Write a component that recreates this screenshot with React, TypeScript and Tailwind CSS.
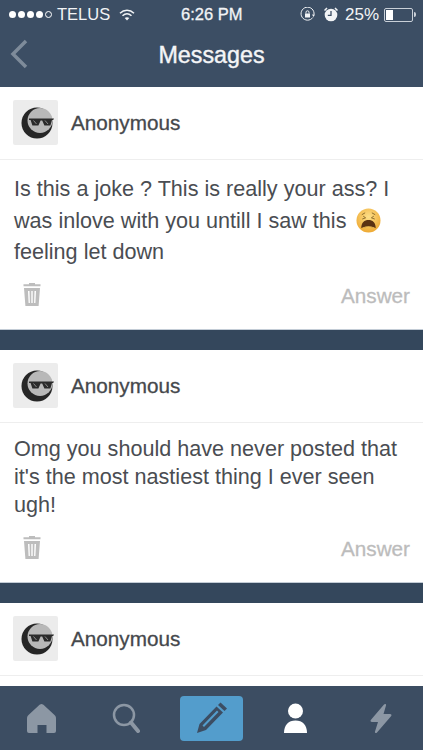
import React from "react";

const font = { fontFamily: '"Liberation Sans", Arial, sans-serif' };

function Avatar() {
  return (
    <div className="flex h-[45px] w-[45px] items-center justify-center rounded-[2px] bg-[#ececec]">
      <svg width="36" height="34" viewBox="-2 0 36 34">
        <circle cx="17" cy="17" r="15.500" fill="#262626" />
        <circle cx="20" cy="14.500" r="12.500" fill="#b8b8b8" />
        <path d="M9 12.500h25l-.8 1.500h-1.200l-1.600 5.500h-6l-2.200-5h-1.600l-2.200 5h-6l-1.800-5.500H9z" fill="#2a2a2a" />
        <path d="M13.500 14.500l3 3.500M25 14.500l3 3.500" stroke="#8a8a8a" strokeWidth="1" />
      </svg>
    </div>
  );
}

function Trash() {
  return (
    <svg width="18" height="25" viewBox="0 0 18 25" fill="#bdbdbd">
      <path d="M6 1h6v1.300h5.500v2H.5v-2H6z" />
      <path d="M1 6h16l-1.400 18H2.400zM5 9l.6 12h1.300L6.500 9zM8.300 9v12h1.400V9zM11.500 9l-.4 12h1.300L13 9z" fillRule="evenodd" />
    </svg>
  );
}

function Emoji() {
  return (
    <svg width="25" height="25" viewBox="0 0 26 26" className="ml-[4px] inline-block align-[-5px]">
      <defs>
        <radialGradient id="face" cx="50%" cy="35%" r="70%">
          <stop offset="0%" stopColor="#fde08a" />
          <stop offset="100%" stopColor="#eda52c" />
        </radialGradient>
      </defs>
      <circle cx="13" cy="13" r="12.500" fill="url(#face)" />
      <path d="M6 7l3.500-2M20 7l-3.500-2M6.500 11.500l3.500-1.300-2.500-1.700M19.500 11.500l-3.500-1.300 2.500-1.700" stroke="#8a6a2a" strokeWidth="1" fill="none" />
      <path d="M5.500 21c0-6 3.300-8.500 7.500-8.500s7.500 2.500 7.500 8.500c-4-1.500-11-1.500-15 0z" fill="#5b3212" />
      <path d="M7.500 20c3.500-1.200 7.500-1.200 11 0l1 .8c-4-1.300-9-1.300-13 0z" fill="#f3c65a" />
    </svg>
  );
}

function CardHeader() {
  return (
    <div className="flex h-[73px] items-center gap-[13px] border-b border-[#eeeeee] pb-[1px] pl-[13px]">
      <Avatar />
      <span className="mt-[1px] text-[20.700px] leading-none text-[#45484c] [-webkit-text-stroke:0.3px_#45484c]">Anonymous</span>
    </div>
  );
}

function CardFooter() {
  return (
    <div className="flex items-center justify-between pt-[3px] pr-[13px] pl-[23px]">
      <Trash />
      <span className="mt-[4px] text-[20.700px] leading-none text-[#bcbcbc] [-webkit-text-stroke:0.3px_#bcbcbc]">Answer</span>
    </div>
  );
}

function Separator() {
  return <div className="h-[21px] border-t border-[#c3ccd6] bg-[#34475c]" />;
}

export default function App() {
  return (
    <div style={font} className="relative flex h-[750px] w-[423px] flex-col overflow-hidden bg-white">
      {/* Header */}
      <header className="h-[87px] shrink-0 bg-[#3c4e64] text-white">
        <div className="relative flex h-[29px] items-center justify-between pr-[7px] pl-[9px] text-[17px] text-[#f2f4f6]">
          <div className="flex items-center gap-[2px]">
            <div className="flex items-center gap-[2px]">
              <span className="h-[7px] w-[7px] rounded-full bg-white" />
              <span className="h-[7px] w-[7px] rounded-full bg-white" />
              <span className="h-[7px] w-[7px] rounded-full bg-white" />
              <span className="h-[7px] w-[7px] rounded-full bg-white" />
              <span className="h-[7px] w-[7px] rounded-full border border-white" />
            </div>
            <span className="ml-[3px] text-[16.500px] leading-none">TELUS</span>
            <svg width="16" height="12" viewBox="0 0 16 12" className="ml-[7px]" fill="none" stroke="#f2f4f6" strokeWidth="1.500">
              <path d="M1 4.200c4-3.800 10-3.800 14 0M3.500 6.800c2.700-2.500 6.300-2.500 9 0" />
              <path d="M8 11.500l-2.300-2.600c1.400-1 3.200-1 4.600 0z" fill="#f2f4f6" stroke="none" />
            </svg>
          </div>
          <span className="absolute left-[181px] text-[16.500px] leading-none [-webkit-text-stroke:0.3px_#f2f4f6]">6:26 PM</span>
          <div className="flex items-center">
            <svg width="15" height="15" viewBox="0 0 15 15" fill="none" stroke="#f2f4f6" strokeWidth="1">
              <path d="M12.800 10.500A6.500 6.500 0 1 1 14 7.500" />
              <rect x="5" y="6.500" width="5" height="4" fill="#f2f4f6" stroke="none" />
              <path d="M6 6.500V5.300a1.500 1.500 0 0 1 3 0v1.200" />
              <path d="M12 7.500h3l-1.500 2.500z" fill="#f2f4f6" stroke="none" />
            </svg>
            <svg width="14" height="15" viewBox="0 0 14 15" className="ml-[9px]">
              <circle cx="7" cy="8" r="6.300" fill="#f2f4f6" />
              <path d="M7 4v4.300H3.800" stroke="#3c4e64" strokeWidth="1.300" fill="none" />
              <path d="M0.500 3.500L3 1M13.500 3.500L11 1" stroke="#f2f4f6" strokeWidth="1.500" />
            </svg>
            <span className="ml-[7px] leading-none">25%</span>
            <div className="ml-[5px] flex h-[14px] w-[29px] items-center rounded-[2px] border border-[#c9d0d8] p-[1px]">
              <div className="h-full w-[7px] bg-white" />
            </div>
            <div className="ml-[1px] h-[5px] w-[2px] rounded-r-sm bg-[#c9d0d8]" />
          </div>
        </div>
        <div className="relative flex h-[52px] items-center justify-center">
          <svg width="18" height="30" viewBox="0 0 18 30" className="absolute top-[10px] left-[10px]" fill="none" stroke="#7e8b9a" strokeWidth="3.500">
            <path d="M16 2L3 15l13 13" />
          </svg>
          <span className="mt-[2px] text-[23.300px] leading-none text-[#f4f5f7] [-webkit-text-stroke:0.4px_#f4f5f7]">Messages</span>
        </div>
      </header>

      {/* Messages */}
      <main className="flex min-h-0 flex-1 flex-col overflow-hidden">
        <section className="h-[242px] shrink-0">
          <CardHeader />
          <p className="h-[119px] px-[14px] pt-[13px] text-[21.600px] leading-[31.500px] text-[#4a4d52]">
            Is this a joke ? This is really your ass? I
            <br />
            was inlove with you untill I saw this <Emoji />
            <br />
            feeling let down
          </p>
          <CardFooter />
        </section>
        <Separator />
        <section className="h-[232px] shrink-0">
          <CardHeader />
          <p className="h-[109px] px-[14px] pt-[12px] text-[21.600px] leading-[28px] text-[#4a4d52]">
            Omg you should have never posted that
            <br />
            it's the most nastiest thing I ever seen
            <br />
            ugh!
          </p>
          <CardFooter />
        </section>
        <Separator />
        <section>
          <CardHeader />
        </section>
      </main>

      {/* Tab bar */}
      <nav className="flex h-[64px] shrink-0 items-center bg-[#3c4d62] pl-[27px]">
        <svg width="29" height="31" viewBox="0 0 29 31" fill="#8c97a4">
          <path d="M14.500 1c1 0 2 .8 3 1.800L27.500 12c1 1 1.500 2 1.500 3.500V28a2 2 0 0 1-2 2h-7.500v-8h-9v8H2a2 2 0 0 1-2-2V15.500C0 14 .5 13 1.500 12l10-9.200c1-1 2-1.800 3-1.800z" />
        </svg>
        <svg width="28" height="31" viewBox="0 0 28 31" className="ml-[56px]" fill="none" stroke="#8c97a4" strokeWidth="2.500" strokeLinecap="round">
          <circle cx="12" cy="12" r="10" />
          <path d="M19 19.500l7 8.500" strokeWidth="4" />
        </svg>
        <div className="ml-[40px] flex h-[45px] w-[63px] items-center justify-center rounded-[4px] bg-[#539dcc]">
          <svg width="32" height="32" viewBox="0 0 32 32" fill="#3c4d62">
            <path d="M24.500 0.500l6.500 6-2.500 2.600-6.500-6z" />
            <path d="M20.500 4.500l6.500 6L10 28 1 31l2.500-9zM21 8.500L6.500 23.500l1.500 1.500 14.500-15z" fillRule="evenodd" />
          </svg>
        </div>
        <svg width="23" height="31" viewBox="0 0 23 31" className="ml-[41px]" fill="#ffffff">
          <circle cx="11.500" cy="8" r="7.500" />
          <path d="M0 30c0-8 4.500-12.500 11.500-12.500S23 22 23 30z" />
        </svg>
        <svg width="22" height="31" viewBox="0 0 22 31" className="ml-[63px]" fill="#8c97a4">
          <path d="M14 1.500c1-1 2.500-.5 2 1L13.500 11H20c1.500 0 2 1.200 1 2.300L7 29.500c-1 1-2.500.4-2-1L8 19H2c-1.500 0-2-1.200-1-2.300z" />
        </svg>
      </nav>
    </div>
  );
}
